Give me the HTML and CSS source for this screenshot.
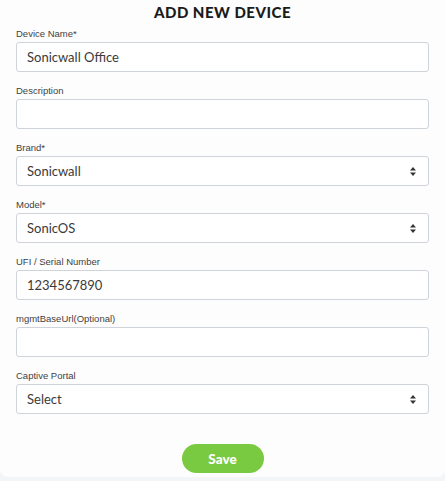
FILE: index.html
```html
<!DOCTYPE html>
<html>
<head>
<meta charset="utf-8">
<link rel="stylesheet" href="styles.css">
</head>
<body>
<div class="card">
  <h1 class="title">ADD NEW DEVICE</h1>
  <div class="field">
    <div class="label">Device Name*</div>
    <div class="box">Sonicwall Office</div>
  </div>
  <div class="field">
    <div class="label">Description</div>
    <div class="box"></div>
  </div>
  <div class="field">
    <div class="label">Brand*</div>
    <div class="box select">Sonicwall<svg class="arrows" width="6" height="9" viewBox="0 0 6 9"><path d="M3 0 L6 3.5 H0 Z M3 9 L0 5.5 H6 Z" fill="#333"/></svg></div>
  </div>
  <div class="field">
    <div class="label">Model*</div>
    <div class="box select">SonicOS<svg class="arrows" width="6" height="9" viewBox="0 0 6 9"><path d="M3 0 L6 3.5 H0 Z M3 9 L0 5.5 H6 Z" fill="#333"/></svg></div>
  </div>
  <div class="field">
    <div class="label">UFI / Serial Number</div>
    <div class="box">1234567890</div>
  </div>
  <div class="field">
    <div class="label">mgmtBaseUrl(Optional)</div>
    <div class="box"></div>
  </div>
  <div class="field">
    <div class="label">Captive Portal</div>
    <div class="box select">Select<svg class="arrows" width="6" height="9" viewBox="0 0 6 9"><path d="M3 0 L6 3.5 H0 Z M3 9 L0 5.5 H6 Z" fill="#333"/></svg></div>
  </div>
  <div class="actions">
    <button class="save">Save</button>
  </div>
</div>
</body>
</html>
```
FILE: styles.css
```css
html, body {
  margin: 0;
  padding: 0;
  background: #f4f5f6;
}
.card {
  background: #fdfdfd;
  height: 477px;
  box-sizing: border-box;
  padding: 2px 16px 0 16px;
  border-radius: 0 0 8px 8px;
  width: 445px;
}
.title {
  margin: 0 0 6px 0;
  text-align: center;
  font-family: "Lato", sans-serif;
  font-weight: 900;
  font-size: 15px;
  line-height: 20px;
  color: #1b1b1b;
  letter-spacing: 0.5px;
}
.field {
  margin-bottom: 13px;
}
.label {
  font-family: "Liberation Sans", Arial, sans-serif;
  font-size: 9.5px;
  line-height: 12px;
  color: #3f3f3f;
  margin-bottom: 2px;
}
.box {
  box-sizing: border-box;
  width: 413px;
  height: 30px;
  border: 1px solid #cfd4da;
  border-radius: 3px;
  background: #fff;
  padding: 0 10px;
  display: flex;
  align-items: center;
  font-family: "Lato", sans-serif;
  font-weight: 400;
  font-size: 13px;
  color: #3a3a3a;
}
.select {
  justify-content: space-between;
  padding-right: 12px;
}
.arrows {
  display: block;
}
.actions {
  display: flex;
  justify-content: center;
  padding-top: 17px;
}
.save {
  width: 82px;
  height: 29px;
  border: none;
  border-radius: 15px;
  background: #7aca41;
  color: #fff;
  font-family: "Lato", sans-serif;
  font-weight: 900;
  font-size: 13.5px;
  padding: 0;
}
```
